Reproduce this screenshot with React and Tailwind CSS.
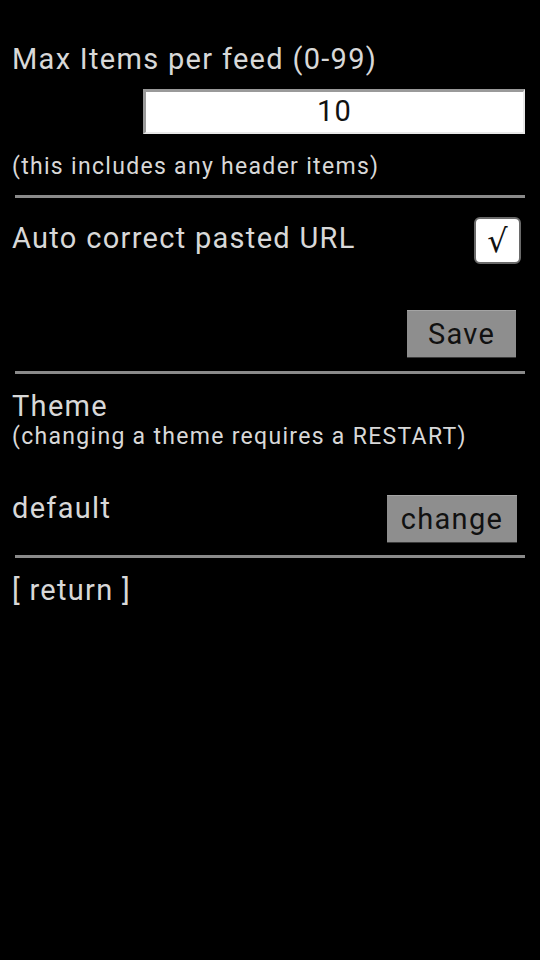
import React from 'react';

const Divider = () => <div className="ml-[3px] h-[3px] bg-[#8a8a8a]" />;

const GrayButton = ({ children, className = '' }) => (
    <button
        className={`h-[47px] bg-[#8e8e8e] text-[#111] text-[29px] tracking-[1.3px] leading-none border-t border-[#a4a4a4] shadow-[0_1px_0_#3a3a3a] ${className}`}
    >
        {children}
    </button>
);

export default function App() {
    return (
        <div
            className="w-[540px] min-h-[960px] bg-black text-[#d8d8d8] tracking-[1.3px]"
            style={{ fontFamily: 'Roboto, "Noto Sans", sans-serif' }}
        >
            <div className="pl-[12px] pr-[15px] pt-[42px]">
                <p className="text-[29px] leading-[35px]">Max Items per feed (0-99)</p>
                <div className="mt-[12px] flex justify-end">
                    <div className="w-[382px] h-[45px] bg-white border-t-[3px] border-l-[3px] border-b-[2px] border-r-[2px] border-t-[#9a9a9a] border-l-[#9a9a9a] border-b-[#e8e8e8] border-r-[#e8e8e8] flex items-center justify-center text-[29px] text-[#111]">
                        10
                    </div>
                </div>
                <p className="mt-[19px] text-[23px] leading-[28px]">(this includes any header items)</p>

                <div className="mt-[14px]">
                    <Divider />
                </div>

                <div className="mt-[19px] flex items-start justify-between">
                    <p className="mt-[4px] text-[29px] leading-[35px]">Auto correct pasted URL</p>
                    <div
                        className="mr-[4px] w-[47px] h-[47px] rounded-[6px] border-2 border-[#6a6a6a] bg-white flex items-center justify-center text-[32px] text-[#111] tracking-normal"
                        style={{ fontFamily: '"DejaVu Sans", sans-serif' }}
                    >
                        √
                    </div>
                </div>

                <div className="mt-[46px] flex justify-end">
                    <GrayButton className="mr-[9px] w-[109px]">Save</GrayButton>
                </div>

                <div className="mt-[14px]">
                    <Divider />
                </div>

                <p className="mt-[15px] text-[29px] leading-[34px]">Theme</p>
                <p className="text-[23px] leading-[28px]">(changing a theme requires a RESTART)</p>

                <div className="mt-[40px] flex items-start justify-between">
                    <p className="text-[29px] leading-[35px]">default</p>
                    <GrayButton className="mt-[4px] mr-[8px] w-[130px]">change</GrayButton>
                </div>

                <div className="mt-[13px]">
                    <Divider />
                </div>

                <p className="mt-[15px] text-[29px] leading-[35px]">[ return ]</p>
            </div>
        </div>
    );
}
